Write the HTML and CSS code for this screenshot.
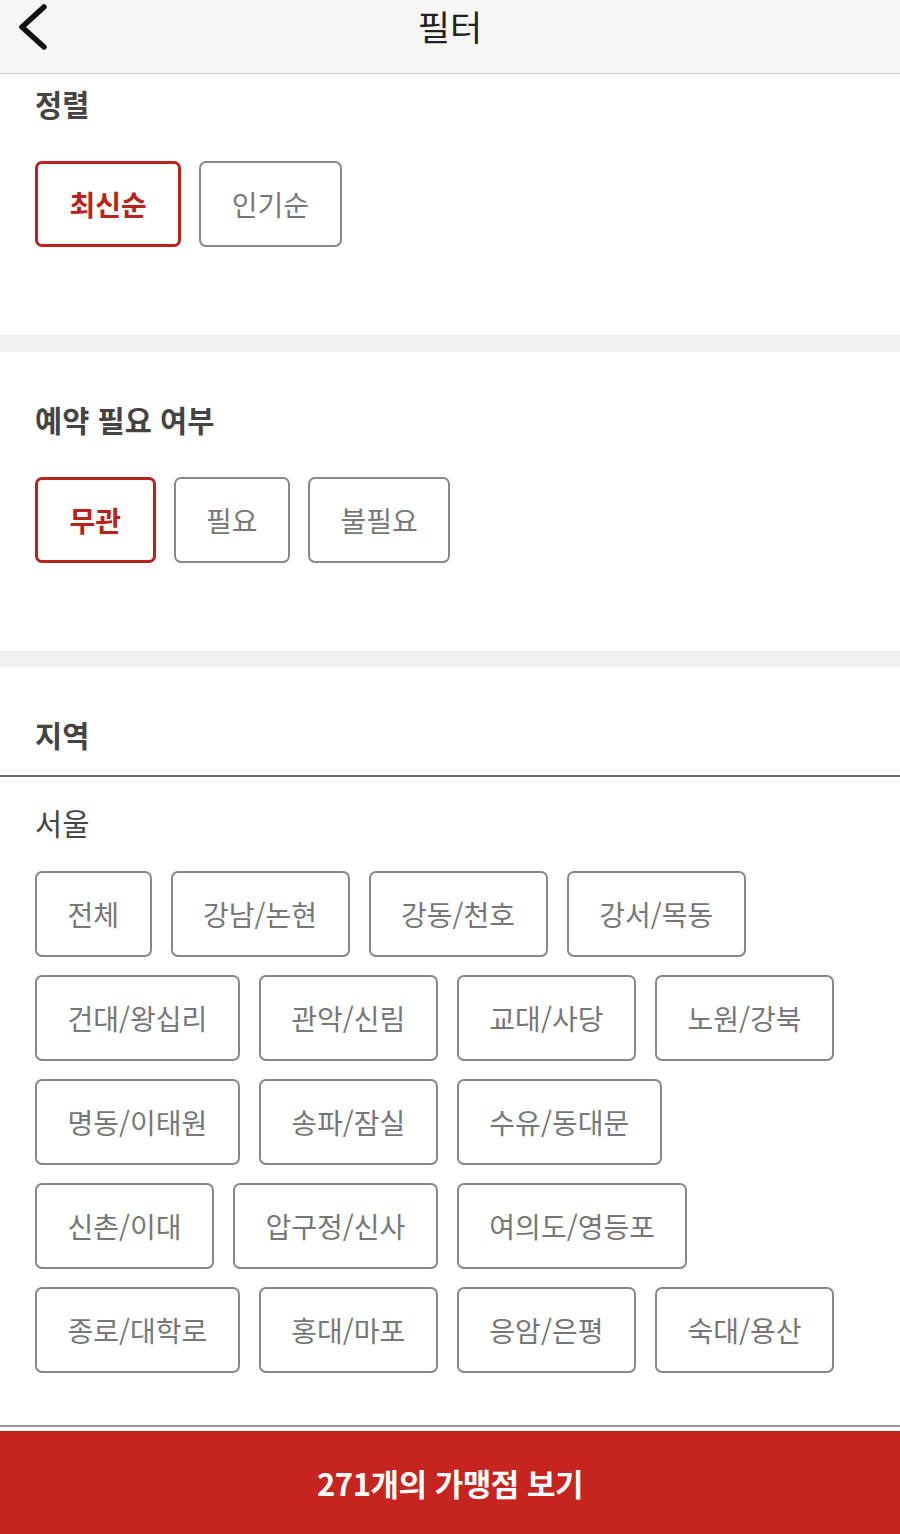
FILE: index.html
```html
<!DOCTYPE html>
<html lang="ko">
<head>
    <meta charset="UTF-8">
    <meta name="viewport" content="width=device-width, initial-scale=1.0">
    <title>필터</title>
    <link rel="stylesheet" href="styles.css">
</head>
<body>
    <div class="filter-page">
        <header class="top-bar">
            <button class="back-button" aria-label="뒤로">
                <svg width="36" height="48" viewBox="0 0 36 48">
                    <path d="M29 5 L7 25 L29 45" fill="none" stroke="#111" stroke-width="5.5" stroke-linecap="round" stroke-linejoin="round"/>
                </svg>
            </button>
            <h1 class="top-title">필터</h1>
            <div></div>
        </header>

        <section class="filter-section sort-section">
            <h2 class="section-title">정렬</h2>
            <div class="option-list">
                <button class="option-button active">최신순</button>
                <button class="option-button">인기순</button>
            </div>
        </section>

        <div class="section-gap"></div>

        <section class="filter-section">
            <h2 class="section-title">예약 필요 여부</h2>
            <div class="option-list">
                <button class="option-button active">무관</button>
                <button class="option-button">필요</button>
                <button class="option-button">불필요</button>
            </div>
        </section>

        <div class="section-gap short"></div>

        <section class="region-section">
            <h2 class="section-title region-title">지역</h2>
            <div class="region-body">
                <p class="city-name">서울</p>
                <div class="option-list region-list">
                    <button class="option-button">전체</button>
                    <button class="option-button">강남/논현</button>
                    <button class="option-button">강동/천호</button>
                    <button class="option-button">강서/목동</button>
                    <button class="option-button">건대/왕십리</button>
                    <button class="option-button">관악/신림</button>
                    <button class="option-button">교대/사당</button>
                    <button class="option-button">노원/강북</button>
                    <button class="option-button">명동/이태원</button>
                    <button class="option-button">송파/잠실</button>
                    <button class="option-button">수유/동대문</button>
                    <button class="option-button">신촌/이대</button>
                    <button class="option-button">압구정/신사</button>
                    <button class="option-button">여의도/영등포</button>
                    <button class="option-button">종로/대학로</button>
                    <button class="option-button">홍대/마포</button>
                    <button class="option-button">응암/은평</button>
                    <button class="option-button">숙대/용산</button>
                </div>
            </div>
        </section>

        <footer class="bottom-bar">
            <button class="show-button">271개의 가맹점 보기</button>
        </footer>
    </div>
</body>
</html>
```

FILE: styles.css
```css
body {
    margin: 0;
    padding: 0;
    background-color: #ffffff;
    font-family: "Noto Sans CJK KR", "Noto Sans", sans-serif;
    color: #444444;
}

.filter-page {
    width: 900px;
}

.top-bar {
    display: grid;
    grid-template-columns: 1fr auto 1fr;
    align-items: center;
    height: 52px;
    padding: 0 0 21px 0;
    background-color: #f6f6f6;
    border-bottom: 1px solid #cccccc;
}

.back-button {
    justify-self: start;
    display: flex;
    padding: 0 0 0 15px;
    border: none;
    background: none;
    cursor: pointer;
}

.top-title {
    margin: 0;
    font-size: 35px;
    font-weight: 400;
    line-height: 52px;
    color: #222222;
}

.filter-section {
    padding: 12px 0 88px 35px;
}

.filter-section + .section-gap + .filter-section {
    padding-top: 50px;
}

.section-title {
    margin: 0;
    font-size: 29.5px;
    font-weight: 700;
    line-height: 34px;
    color: #444444;
}

.option-list {
    display: flex;
    flex-wrap: wrap;
    gap: 18px 18px;
    margin-top: 41px;
}

.option-button {
    box-sizing: border-box;
    height: 86px;
    padding: 0 30.5px;
    border: 2px solid #888888;
    border-radius: 7px;
    background-color: #ffffff;
    font-family: inherit;
    font-size: 28px;
    color: #777777;
    cursor: pointer;
}

.option-button.active {
    padding: 0 31.5px;
    border: 3px solid #b8231d;
    color: #b8231d;
    font-weight: 700;
}

.section-gap {
    height: 17px;
    background-color: #f0f0f0;
}

.section-gap.short {
    height: 16px;
}

.region-section {
    padding-bottom: 52px;
}

.region-title {
    padding: 50px 0 24px 35px;
    border-bottom: 2px solid #666666;
}

.region-body {
    padding: 28px 50px 0 35px;
}

.city-name {
    margin: 0;
    font-size: 29.5px;
    line-height: 34px;
    color: #444444;
}

.region-list {
    gap: 18px 19px;
    margin-top: 32px;
}

.bottom-bar {
    border-top: 2px solid #999999;
    padding-top: 4px;
}

.show-button {
    display: block;
    width: 100%;
    height: 103px;
    border: none;
    background-color: #c6241f;
    color: #ffffff;
    font-family: inherit;
    font-size: 31px;
    font-weight: 700;
    letter-spacing: -0.5px;
    cursor: pointer;
}
```
